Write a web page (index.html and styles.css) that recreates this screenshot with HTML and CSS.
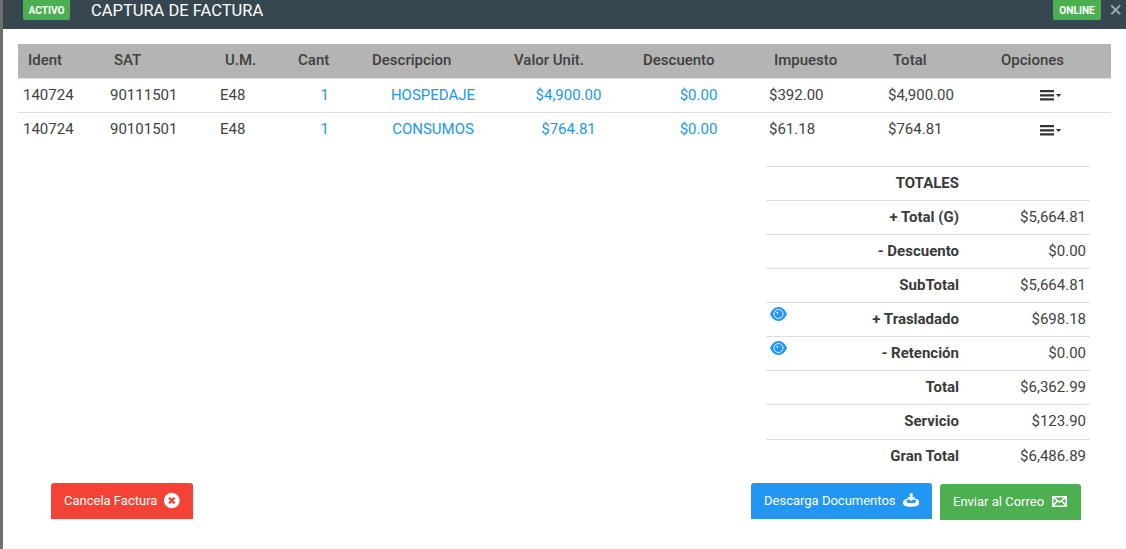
FILE: index.html
```html
<!DOCTYPE html>
<html lang="es">
<head>
<meta charset="utf-8">
<title>Captura de factura</title>
<link rel="stylesheet" href="styles.css">
</head>
<body>
<div class="modal">
  <header class="head">
    <span class="badge">ACTIVO</span>
    <h1 class="title">CAPTURA DE FACTURA</h1>
    <span class="badge online">ONLINE</span>
    <span class="close">✕</span>
  </header>
  <main class="content">
    <div class="items">
      <div class="row hrow">
        <span class="c1">Ident</span><span class="c2">SAT</span><span class="c3">U.M.</span><span class="c4">Cant</span><span class="c5">Descripcion</span><span class="c6">Valor Unit.</span><span class="c7">Descuento</span><span class="c8">Impuesto</span><span class="c9">Total</span><span class="c10">Opciones</span>
      </div>
      <div class="row">
        <span class="c1">140724</span><span class="c2">90111501</span><span class="c3">E48</span><span class="c4 link">1</span><span class="c5 link">HOSPEDAJE</span><span class="c6 link">$4,900.00</span><span class="c7 link">$0.00</span><span class="c8">$392.00</span><span class="c9">$4,900.00</span>
        <span class="c10"><svg class="menu" width="22" height="11" viewBox="0 0 22 11"><path d="M0 0h14v2.200H0zM0 4.200h14v2.200H0zM0 8.300h14v2.200H0z" fill="#333"/><path d="M15.800 4h5.600L18.600 7z" fill="#333"/></svg></span>
      </div>
      <div class="row">
        <span class="c1">140724</span><span class="c2">90101501</span><span class="c3">E48</span><span class="c4 link">1</span><span class="c5 link">CONSUMOS</span><span class="c6 link">$764.81</span><span class="c7 link">$0.00</span><span class="c8">$61.18</span><span class="c9">$764.81</span>
        <span class="c10"><svg class="menu" width="22" height="11" viewBox="0 0 22 11"><path d="M0 0h14v2.200H0zM0 4.200h14v2.200H0zM0 8.300h14v2.200H0z" fill="#333"/><path d="M15.800 4h5.600L18.600 7z" fill="#333"/></svg></span>
      </div>
    </div>
    <div class="totals">
      <div class="trow"><b>TOTALES</b><span></span></div>
      <div class="trow"><b>+ Total (G)</b><span>$5,664.81</span></div>
      <div class="trow"><b>- Descuento</b><span>$0.00</span></div>
      <div class="trow"><b>SubTotal</b><span>$5,664.81</span></div>
      <div class="trow"><svg class="eye" width="17" height="14" viewBox="0 0 17 14"><path fill="#2196f3" d="M8.500 0C12.500 0 15.600 3.500 17 7 15.600 10.500 12.500 14 8.500 14 4.500 14 1.400 10.500 0 7 1.400 3.500 4.500 0 8.500 0z"/><circle cx="8.500" cy="7" r="4.500" fill="none" stroke="#fff" stroke-width=".9"/><path fill="#fff" d="M6.300 4.800 8.600 5.500 7.100 7.300z"/></svg><b>+ Trasladado</b><span>$698.18</span></div>
      <div class="trow"><svg class="eye" width="17" height="14" viewBox="0 0 17 14"><path fill="#2196f3" d="M8.500 0C12.500 0 15.600 3.500 17 7 15.600 10.500 12.500 14 8.500 14 4.500 14 1.400 10.500 0 7 1.400 3.500 4.500 0 8.500 0z"/><circle cx="8.500" cy="7" r="4.500" fill="none" stroke="#fff" stroke-width=".9"/><path fill="#fff" d="M6.300 4.800 8.600 5.500 7.100 7.300z"/></svg><b>- Retención</b><span>$0.00</span></div>
      <div class="trow"><b>Total</b><span>$6,362.99</span></div>
      <div class="trow tall"><b>Servicio</b><span>$123.90</span></div>
      <div class="trow"><b>Gran Total</b><span>$6,486.89</span></div>
    </div>
    <div class="actions">
      <a class="btn red">Cancela Factura<svg width="17" height="17" viewBox="0 0 17 17"><circle cx="8.500" cy="8.500" r="8.500" fill="#fff"/><path d="M5.500 5.500l6 6M11.500 5.500l-6 6" stroke="#f44336" stroke-width="2.600"/></svg></a>
      <span class="spacer"></span>
      <a class="btn blue">Descarga Documentos<svg width="17" height="14" viewBox="0 0 17 14"><ellipse cx="8.500" cy="9" rx="8.500" ry="3.800" fill="#fff"/><path fill="#fff" d="M0 9h17v1.500C17 12.500 13 14 8.500 14S0 12.500 0 10.500z"/><ellipse cx="8.500" cy="8.200" rx="5" ry="2" fill="#2196f3"/><path fill="#fff" d="M7 0h3v3.800h2.800L8.500 8.300 4.200 3.800H7z"/></svg></a>
      <a class="btn green">Enviar al Correo<svg width="15" height="11" viewBox="0 0 15 11"><path fill="none" stroke="#fff" stroke-width="1.500" d="M.800.800h13.400v9.400H.800zM.800.800 7.500 6l6.700-5.200M.800 10.200 5.500 4.500M14.200 10.200 9.500 4.500"/></svg></a>
    </div>
  </main>
</div>
</body>
</html>
```
FILE: styles.css
```css
* { box-sizing: border-box; }
html, body { margin: 0; height: 100%; }
body { background: #6f6f6f; overflow: hidden; font-family: Roboto, "Liberation Sans", sans-serif; font-size: 15px; color: #424242; }
.modal { margin-left: 3px; height: 549px; display: flex; flex-direction: column; background: #fff; }
.head { height: 29px; flex: none; background: #37474f; display: flex; align-items: flex-start; padding-left: 20px; }
.badge { width: 47px; height: 20px; background: #4caf50; color: #fff; border-radius: 0 0 2px 2px; font-size: 10.2px; font-weight: 700; line-height: 21px; text-align: center; flex: none; }
.title { margin: 0 0 0 21px; font-size: 16.5px; font-weight: 400; color: #fff; line-height: 21px; flex: 1; }
.online { width: 48px; }
.close { width: 25px; padding-left: 4px; text-align: center; color: #a3afb5; font-family: "DejaVu Sans", sans-serif; font-size: 17px; line-height: 20px; }
.content { flex: 1; padding: 15px 15px 0; display: flex; flex-direction: column; border-bottom: 3px solid #fafafa; }
.items { width: 1093px; }
.row { height: 34px; padding-bottom: 2px; display: grid; grid-template-columns: 87px 110px 73px 74px 142px 129px 131px 119px 108px 120px; align-items: center; border-bottom: 1px solid #ddd; }
.row:last-child { border-bottom: 0; }
.hrow { background: #b4b4b4; border-bottom: 0; box-shadow: 0 1px 0 #ddd; margin-bottom: 1px; font-weight: 500; color: #404040; }
.row span { white-space: nowrap; padding-left: 5px; }
.hrow span { padding-left: 10px; }
.hrow .c2 { padding-left: 9px; }
.row .c4 { text-align: right; padding: 0 33px 0 0; }
.hrow .c4 { text-align: left; padding: 0 0 0 10px; }
.row .c5, .row .c6, .row .c7 { text-align: center; padding-left: 0; }
.hrow .c5, .hrow .c6, .hrow .c7 { text-align: left; padding-left: 10px; }
.link { color: #2196f3; }
.menu { display: block; margin: 0 auto; position: relative; top: 1px; }
.row .c10 { padding-left: 0; }
.hrow .c10 { padding-left: 10px; }
.totals { width: 324px; margin: 19px 0 0 748px; border-top: 1px solid #ddd; }
.trow { height: 34px; padding-bottom: 2px; display: flex; align-items: center; border-bottom: 1px solid #ddd; position: relative; }
.trow.tall { height: 35px; }
.trow:last-child { border-bottom: 0; padding-bottom: 3px; }
.trow b { width: 193px; text-align: right; font-weight: 700; color: #3a3a3a; }
.trow span { flex: 1; text-align: right; padding-right: 4px; }
.eye { position: absolute; left: 4px; top: 4px; }
.actions { display: flex; align-items: flex-start; padding-left: 33px; margin-top: 9px; }
.spacer { width: 550px; }
.btn { height: 36px; padding: 0 13px 2px; margin-right: 8px; display: flex; align-items: center; gap: 7px; color: #fff; font-size: 13px; border-radius: 3px 3px 0 0; white-space: nowrap; }
.red { background: #f44336; width: 142px; }
.blue { background: #2196f3; width: 181px; }
.green { background: #4caf50; width: 141px; margin-top: 1px; }
.green svg { margin-left: 1px; }
```
